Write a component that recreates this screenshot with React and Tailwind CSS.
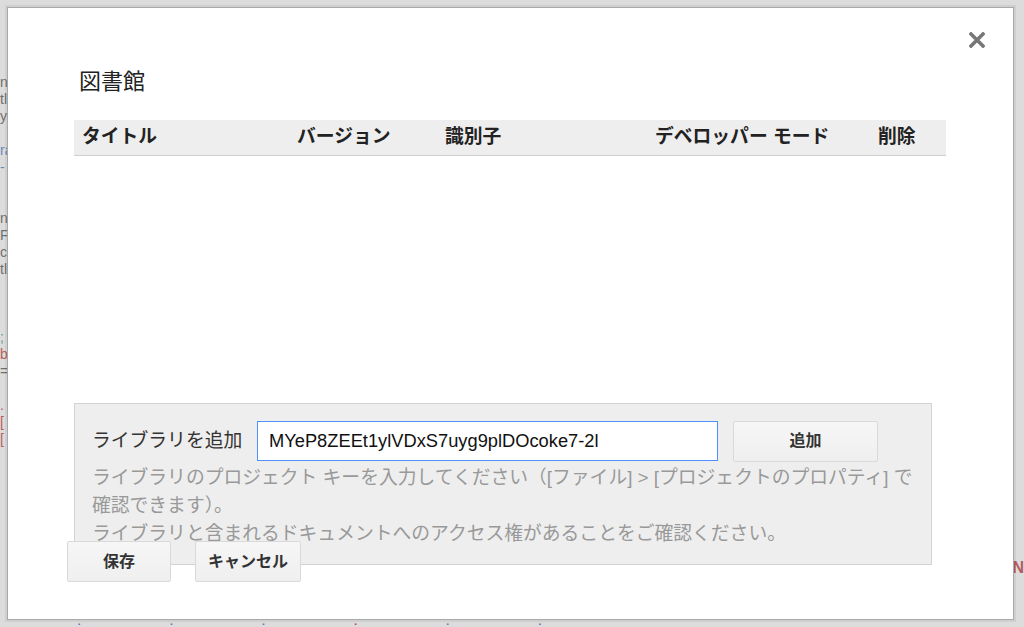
import React from 'react'

// script editor page that sits behind the dialog, only a sliver of it shows
const behindLines = [
  { text: 'nd', color: 'text-[#555]' },
  { text: 'tl', color: 'text-[#555]' },
  { text: 'y;', color: 'text-[#555]' },
  { text: '', color: '' },
  { text: 'ra', color: 'text-[#4a76b0]' },
  { text: '-', color: 'text-[#4a76b0]' },
  { text: '', color: '' },
  { text: '', color: '' },
  { text: 'n', color: 'text-[#555]' },
  { text: 'Fa', color: 'text-[#555]' },
  { text: 'co', color: 'text-[#555]' },
  { text: 'tl', color: 'text-[#555]' },
  { text: '', color: '' },
  { text: '', color: '' },
  { text: '', color: '' },
  { text: ';', color: 'text-[#3f8f6e]' },
  { text: 'bo', color: 'text-[#b03a3a]' },
  { text: '=', color: 'text-[#555]' },
  { text: '', color: '' },
  { text: '.', color: 'text-[#b03a3a]' },
  { text: '[', color: 'text-[#b03a3a]' },
  { text: '[', color: 'text-[#b03a3a]' },
]

const columns = ['タイトル', 'バージョン', '識別子', 'デベロッパー モード', '削除']

const font = { fontFamily: '"Liberation Sans", "Noto Sans CJK JP", sans-serif' }

const GrayButton = ({ children, className }) => {
  return (
    <button
      className={
        'relative h-[41px] rounded-[2px] border border-[#d9d9d9] bg-gradient-to-b from-[#f6f6f6] to-[#efefef] text-[16px] font-bold text-[#333] ' +
        className
      }
    >
      {children}
    </button>
  )
}

const App = () => {
  return (
    <div className="relative h-[627px] w-[1024px] overflow-hidden bg-[#dcdcdc]" style={font}>
      <div className="flex flex-col pt-[74px] text-[14px] leading-[17px] opacity-80">
        {behindLines.map((line, i) => (
          <div key={i} className={'h-[17px] ' + line.color}>{line.text}</div>
        ))}
      </div>
      <div className="absolute right-0 top-[556px] text-[16px] font-bold text-[#b03a3a] opacity-80">MN</div>
      <div className="absolute bottom-0 left-0 flex h-[5px] w-full items-end gap-[90px] pl-[78px] text-[6px] leading-[5px] text-[#4a76b0]">
        <span>▪</span><span>▪</span><span>▪</span><span className="text-[#b03a3a]">▪</span><span>▪</span><span>▪</span>
      </div>

      <div className="absolute left-[7px] top-[7px] flex h-[613px] w-[1007px] flex-col border border-[#a9a9a9] bg-white pl-[66px] pr-[67px] shadow-[0_0_0_2px_rgba(0,0,0,0.06)]">
        <button className="absolute right-[26px] top-[22px] p-[2px]">
          <svg width="16" height="16" viewBox="0 0 16 16">
            <path d="M2 2 L14 14 M14 2 L2 14" stroke="#777" strokeWidth="3.6" strokeLinecap="square" />
          </svg>
        </button>

        <h1 className="mt-[59px] pl-[5px] text-[22px] leading-[30px] font-normal text-[#222]">図書館</h1>

        <div className="mt-[23px] grid h-[36px] grid-cols-[215px_148px_210px_223px_1fr] items-center border-b border-[#cfcfcf] bg-[#eeeeee] pl-[8px] text-[18.8px] font-bold text-[#222]">
          {columns.map((col) => (
            <div key={col} className="whitespace-nowrap">{col}</div>
          ))}
        </div>

        <div className="h-[247px]"></div>

        <div className="mr-[14px] border border-[#d3d3d3] bg-[#eeeeee] pb-[16px] pl-[17px] pt-[16px]">
          <div className="flex h-[42px] items-center">
            <label className="w-[165px] whitespace-nowrap text-[18.8px] text-[#333]">ライブラリを追加</label>
            <input
              defaultValue="MYeP8ZEEt1ylVDxS7uyg9plDOcoke7-2l"
              className="h-[40px] w-[461px] border border-[#4d90fe] bg-white pl-[11px] text-[18.3px] text-[#111] outline-none"
              style={font}
            />
            <GrayButton className="ml-[15px] w-[145px]">追加</GrayButton>
          </div>
          <div className="mt-[2px] whitespace-nowrap text-[18.8px] leading-[28px] text-[#999]">
            <div>ライブラリのプロジェクト キーを入力してください（[ファイル] &gt; [プロジェクトのプロパティ] で</div>
            <div>確認できます）。</div>
            <div>ライブラリと含まれるドキュメントへのアクセス権があることをご確認ください。</div>
          </div>
        </div>

        <div className="-ml-[7px] -mt-[24px] flex gap-[24px]">
          <GrayButton className="w-[104px]">保存</GrayButton>
          <GrayButton className="w-[106px]">キャンセル</GrayButton>
        </div>
      </div>
    </div>
  )
}

export default App
